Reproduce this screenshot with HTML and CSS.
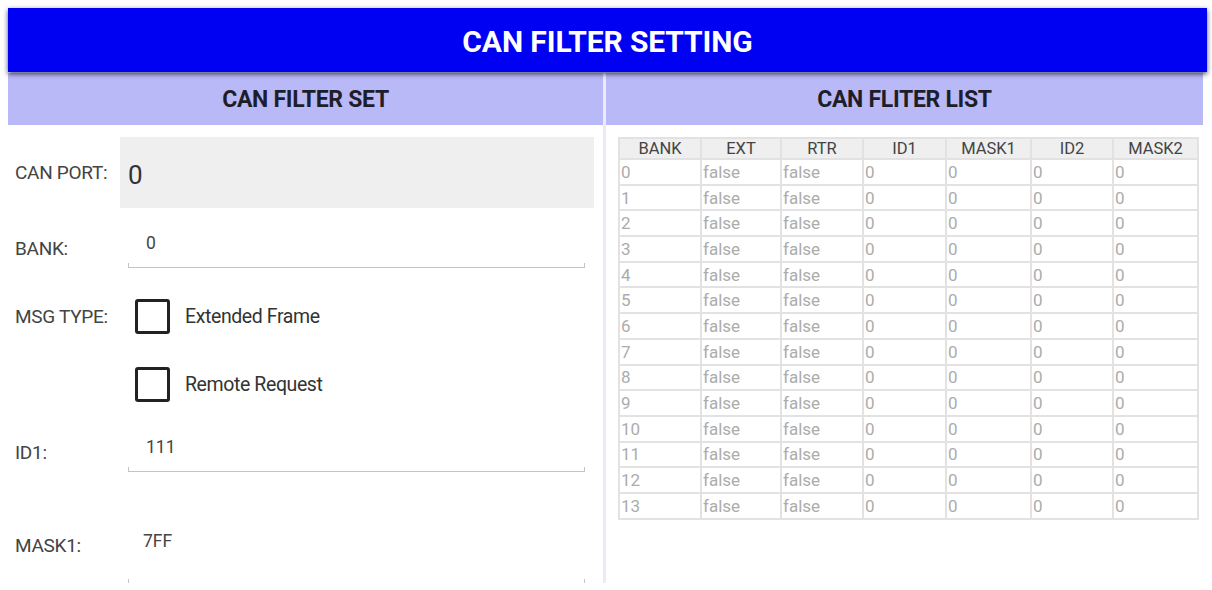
FILE: index.html
```html
<!DOCTYPE html>
<html lang="en">
<head>
  <meta charset="UTF-8" />
  <meta name="viewport" content="width=device-width, initial-scale=1.0" />
  <title>CAN Filter Setting</title>
  <link rel="stylesheet" href="styles.css">
</head>
<body>
  <div class="screen">
    <div class="topbar">CAN FILTER SETTING</div>

    <div class="panels">
      <div class="panel left">
        <div class="subhead">CAN FILTER SET</div>
        <div class="form">
          <div class="row port-row">
            <span class="label">CAN PORT:</span>
            <div class="port-box">0</div>
          </div>

          <div class="row edit-row">
            <span class="label">BANK:</span>
            <div class="edit">0</div>
          </div>

          <div class="row check-row">
            <span class="label">MSG TYPE:</span>
            <label class="check"><span class="box"></span>Extended Frame</label>
          </div>

          <div class="row check-row second">
            <span class="label"></span>
            <label class="check"><span class="box"></span>Remote Request</label>
          </div>

          <div class="row edit-row">
            <span class="label">ID1:</span>
            <div class="edit">111</div>
          </div>

          <div class="row mask-row">
            <span class="label">MASK1:</span>
            <div class="edit tall">7FF</div>
          </div>
        </div>
      </div>

      <div class="panel right">
        <div class="subhead">CAN FLITER LIST</div>
        <div class="list">
          <table class="filters">
            <colgroup>
              <col class="c-bank"><col class="c-ext"><col class="c-rtr"><col class="c-id1">
              <col class="c-mask1"><col class="c-id2"><col class="c-mask2">
            </colgroup>
            <thead>
              <tr>
                <th>BANK</th><th>EXT</th><th>RTR</th><th>ID1</th><th>MASK1</th><th>ID2</th><th>MASK2</th>
              </tr>
            </thead>
            <tbody id="rows"></tbody>
          </table>
        </div>
      </div>
    </div>
  </div>

  <script>
    var tbody = document.getElementById('rows');
    for (var i = 0; i < 14; i++) {
      var tr = document.createElement('tr');
      var cells = [i, 'false', 'false', 0, 0, 0, 0];
      cells.forEach(function (v) {
        var td = document.createElement('td');
        td.textContent = v;
        tr.appendChild(td);
      });
      tbody.appendChild(tr);
    }
  </script>
</body>
</html>
```

FILE: styles.css
```css
body {
  margin: 0;
  background: #fff;
  font-family: Roboto, 'Liberation Sans', sans-serif;
  overflow: hidden;
}
.screen {
  padding: 8px 5px 0 8px;
  height: 575px;
  overflow: hidden;
}
.topbar {
  height: 64px;
  line-height: 68px;
  background: #0000f2;
  color: #fff;
  font-size: 30px;
  font-weight: bold;
  letter-spacing: -0.1px;
  text-align: center;
  box-shadow: 0 2px 5px rgba(0, 0, 40, 0.7);
  position: relative;
  z-index: 1;
}
.panels {
  display: grid;
  grid-template-columns: 595px 1fr;
  height: 520px;
  margin-top: 1px;
}
.panel.right {
  border-left: 3px solid #ebebf3;
  margin-right: 4px;
}
.subhead {
  height: 52px;
  line-height: 54px;
  background: #b9b9f7;
  color: #1e1e2a;
  font-size: 23px;
  font-weight: bold;
  letter-spacing: -0.3px;
  text-align: center;
}
.form {
  padding: 12px 9px 0 7px;
}
.row {
  display: grid;
  grid-template-columns: 105px 1fr;
  align-items: center;
}
.label {
  color: #444;
  font-size: 19px;
  letter-spacing: -0.3px;
}
.port-row {
  height: 71px;
}
.port-box {
  height: 71px;
  background: #efefef;
  color: #333;
  font-size: 26px;
  line-height: 76px;
  padding-left: 8px;
}
.edit-row {
  height: 80px;
}
.edit {
  position: relative;
  height: 40px;
  margin: 0 9px 0 8px;
  border-bottom: 1px solid #c4c4c4;
  box-sizing: border-box;
  padding: 5px 0 0 18px;
  color: #444;
  font-size: 17.5px;
}
.edit::before,
.edit::after {
  content: "";
  position: absolute;
  bottom: -1px;
  width: 1px;
  height: 5px;
  background: #c4c4c4;
}
.edit::before {
  left: 0;
}
.edit::after {
  right: 0;
}
.check-row {
  height: 56px;
}
.check-row.second {
  margin-top: 12px;
}
.check {
  display: flex;
  align-items: center;
  gap: 15px;
  color: #333;
  font-size: 19.5px;
  letter-spacing: -0.4px;
  padding-left: 15px;
}
.box {
  width: 29px;
  height: 29px;
  border: 3px solid #222;
  border-radius: 3px;
}
.mask-row {
  height: 100px;
  align-items: start;
}
.mask-row .label {
  margin-top: 42px;
}
.edit.tall {
  height: 60px;
  margin-top: 32px;
  padding-top: 7px;
  padding-left: 15px;
}
.list {
  padding: 12px 0 0 12px;
}
.filters {
  border-collapse: collapse;
  width: 579px;
  table-layout: fixed;
}
.c-bank { width: 82px; }
.c-ext { width: 80px; }
.c-rtr { width: 82px; }
.c-id1 { width: 83px; }
.c-mask1 { width: 85px; }
.c-id2 { width: 82px; }
.c-mask2 { width: 85px; }
.filters th,
.filters td {
  border: 2px solid #e2e2e2;
  font-weight: normal;
  white-space: nowrap;
  overflow: hidden;
}
.filters th {
  height: 19px;
  padding: 0;
  background: #efefef;
  color: #444;
  font-size: 16.5px;
  text-align: center;
}
.filters td {
  height: 23.7px;
  padding: 0 0 0 1px;
  color: #acacac;
  font-size: 17px;
  line-height: 20px;
  text-align: left;
}
```
